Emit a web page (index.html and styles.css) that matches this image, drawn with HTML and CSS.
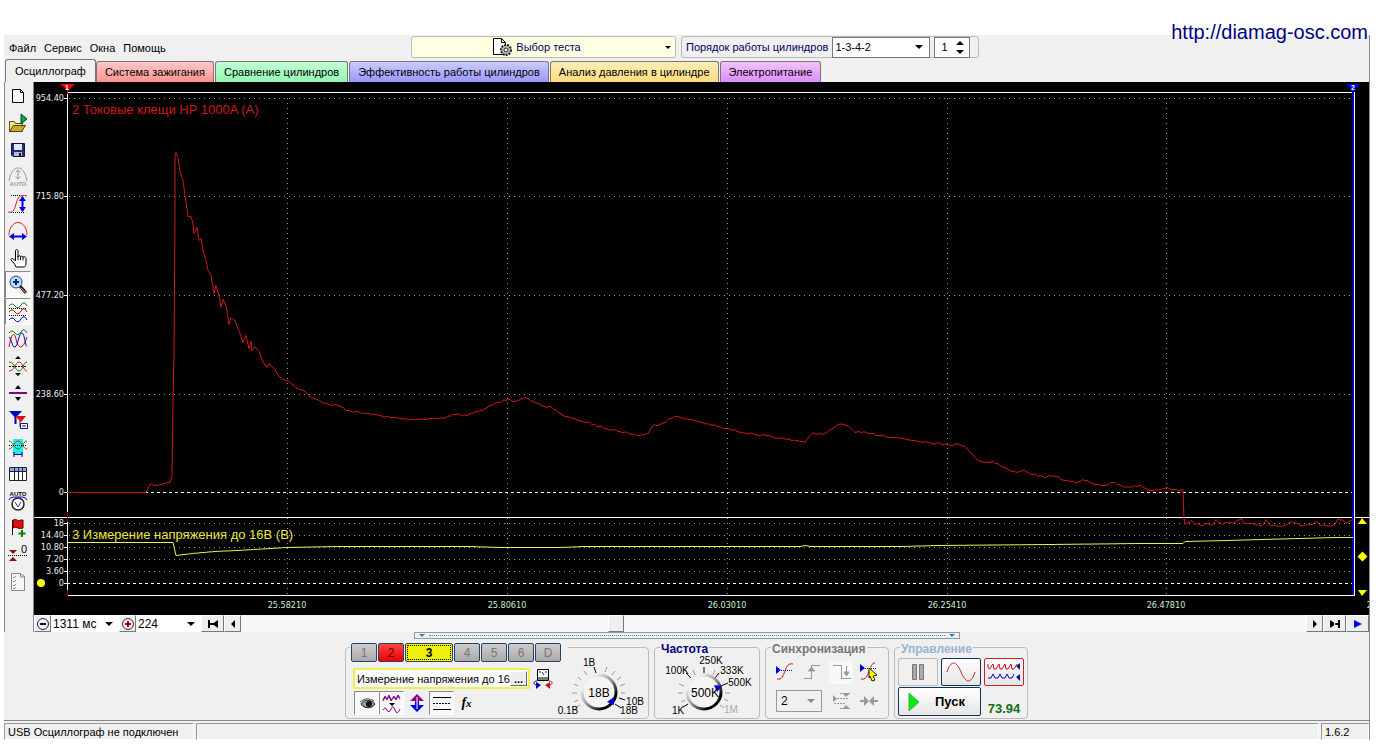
FILE: index.html
```html
<!DOCTYPE html>
<html lang="ru">
<head>
<meta charset="utf-8">
<title>USB Осциллограф</title>
<link rel="stylesheet" href="styles.css">
<script src="traces.js" defer></script>
</head>
<body>
<a class="site" href="http://diamag-osc.com">http://diamag-osc.com</a>
<div class="app">
  <header class="top">
    <nav class="menu">
      <button>Файл</button><button>Сервис</button><button>Окна</button><button>Помощь</button>
    </nav>
    <button class="test">
      <span class="test-name">
        <svg width="21" height="20" viewBox="0 0 21 20"><path d="M1.500 1.500h8l4 4v12h-12z" fill="#fff" stroke="#000"/><path d="M9.500 1.500v4h4" fill="none" stroke="#000"/><circle cx="14" cy="13" r="5" fill="#b9c4b4" stroke="#222" stroke-width="2" stroke-dasharray="2 1"/><circle cx="14" cy="13" r="2" fill="#fff" stroke="#222"/></svg>
        Выбор теста
      </span>
      <i class="down small"></i>
    </button>
    <div class="order">
      <label for="order">Порядок работы цилиндров</label>
      <span class="combo order-combo"><select id="order"><option>1-3-4-2</option></select><i class="down"></i></span>
      <span class="spin">
        <input aria-label="Цилиндр" value="1">
        <span class="spin-keys"><button aria-label="Больше"><i class="up"></i></button><button aria-label="Меньше"><i class="down"></i></button></span>
      </span>
    </div>
  </header>

  <div class="tabs" role="tablist">
    <button class="tab active" role="tab">Осциллограф</button>
    <button class="tab red" role="tab">Система зажигания</button>
    <button class="tab green" role="tab">Сравнение цилиндров</button>
    <button class="tab blue" role="tab">Эффективность работы цилиндров</button>
    <button class="tab amber" role="tab">Анализ давления в цилиндре</button>
    <button class="tab violet" role="tab">Электропитание</button>
  </div>

  <main class="work">
    <div class="tools">
      <button aria-label="Новый"><svg viewBox="0 0 22 22"><path d="M5.500 4.500h8l3 3v10h-11z" fill="#fff" stroke="#000"/><path d="M13.500 4.500v3h3" fill="none" stroke="#000"/></svg></button>
      <button aria-label="Открыть"><svg viewBox="0 0 22 22"><path d="M2.500 19.500v-10h5l1 2h7v8z" fill="#f6e08a" stroke="#665500"/><path d="M2.500 19.500l4-6h12l-4 6z" fill="#c9a92c" stroke="#544400"/><path d="M14 2v10l6-5z" fill="#0a4" stroke="#042"/></svg></button>
      <button aria-label="Сохранить"><svg viewBox="0 0 22 22"><path d="M4.500 4.500h13v13H6l-1.500-1.500z" fill="#24307c" stroke="#101638"/><path d="M7 5h8v6H7z" fill="#dfe8ff"/><path d="M7 13h8v4H7z" fill="#b8bcc8"/><path d="M12 14h2v3h-2z" fill="#111"/></svg></button>
      <button aria-label="Авто" disabled><svg viewBox="0 0 22 22"><g fill="none" stroke="#999"><path d="M2 15C4 5 7 2 11 2s7 3 9 13M11 4v9M8.500 6.500L11 4l2.500 2.500M8.500 10.500L11 13l2.500-2.500"/></g><text x="11" y="20" class="tiny dim">AUTO</text></svg></button>
      <button aria-label="Вертикальный масштаб"><svg viewBox="0 0 22 22"><path d="M4 2.500h14M4 19.500h14" stroke="#000" stroke-dasharray="1 1"/><path d="M1 19c5 1 6-1 8-8s4-10 11-8" fill="none" stroke="#c22"/><path d="M15.500 4v14" stroke="#00d" stroke-width="2"/><path d="M12 8l3.500-5L19 8zM12 14l3.500 5 3.500-5z" fill="#00d"/></svg></button>
      <button aria-label="Горизонтальный масштаб"><svg viewBox="0 0 22 22"><path d="M2 15C2 8 6 2.500 11 2.500S20 8 20 15" fill="none" stroke="#d22"/><path d="M4 16.500h14" stroke="#00d" stroke-width="2"/><path d="M7 13l-5 3.500L7 20zM15 13l5 3.500-5 3.500z" fill="#00d"/></svg></button>
      <button aria-label="Перемещение"><svg viewBox="0 0 22 22"><path d="M8.500 14V4c0-2 2.500-2 2.500 0v6c0-2 2.500-1.500 2.500 0 0-1.500 2.500-1 2.500.5 0-1.500 3-1 3 1V16c0 2-1 4-2 4H9c-1-3-3-5-5-7 0-2 2-2 4.500 1z" fill="#fff" stroke="#000"/><path d="M11 9v4M13.500 10v3M16 10.500v3" stroke="#000"/></svg></button>
      <button class="on" aria-label="Лупа"><svg viewBox="0 0 22 22"><path d="M13 12l6 7" stroke="#222" stroke-width="3"/><path d="M14 14l5 5" stroke="#c96" stroke-width="1"/><circle cx="9" cy="8" r="6" fill="#b8dcff" stroke="#247"/><path d="M9 5v6M6 8h6" stroke="#029" stroke-width="2"/></svg></button>
      <button class="on" aria-label="Раздельно"><svg viewBox="0 0 22 22" fill="none"><path d="M2 5q3-4 6 0t6-1 6 1" stroke="#080"/><path d="M2 7.500h18M2 14.500h18" stroke="#000" stroke-dasharray="1 1"/><path d="M2 11q3-4 6 0t6-1 6 1" stroke="#c00"/><path d="M2 19q3-4 6 0t6-1 6 1" stroke="#00c"/></svg></button>
      <button aria-label="Вместе"><svg viewBox="0 0 22 22" fill="none"><path d="M2 5q3-4 6 0t6-1 6 1" stroke="#080"/><path d="M2 19C5 1 8 6 9 11s5 16 11-2" stroke="#c00"/><path d="M2 9c3 2 3 11 6 10s4-15 7-14 3 14 5 13" stroke="#00c"/></svg></button>
      <button aria-label="Центрировать"><svg viewBox="0 0 22 22" fill="none"><path d="M2 11.500h18" stroke="#000" stroke-dasharray="2 1"/><path d="M2 7c6 0 6 9 10 9s4-9 8-9" stroke="#080"/><path d="M2 16c6 0 6-9 10-9s4 9 8 9" stroke="#c22"/><path d="M8 4h6l-3-3zM8 18h6l-3 3z" fill="#000"/></svg></button>
      <button aria-label="Сжать"><svg viewBox="0 0 22 22"><path d="M2 11h18" stroke="#808" stroke-width="2"/><path d="M8 7h6l-3-4zM8 15h6l-3 4z" fill="#000"/></svg></button>
      <button aria-label="Маркеры"><svg viewBox="0 0 22 22"><path d="M2 2h13L8.500 9z" fill="#00d"/><path d="M8.500 3v12" stroke="#00a" stroke-width="2"/><path d="M8 7h11l-5 6z" fill="#d11"/><path d="M13 12v6" stroke="#a00"/><path d="M13.500 14.500h7v5h-7z" fill="#fff" stroke="#118"/><path d="M15 17h4" stroke="#118"/></svg></button>
      <button aria-label="Интервал"><svg viewBox="0 0 22 22" fill="none"><path d="M6 3h10v16H6z" fill="#2ee"/><path d="M2 5c4 0 5 8 9 8s5-8 9-8" stroke="#080"/><path d="M2 13c4 0 5-8 9-8s5 8 9 8" stroke="#c22"/><path d="M2 9.500h18" stroke="#000" stroke-dasharray="1 1"/><path d="M7 18.500h8M7 16v5M15 16v5" stroke="#00a"/></svg></button>
      <button aria-label="Таблица"><svg viewBox="0 0 22 22"><path d="M2.500 4.500h17v13h-17z" fill="#fff" stroke="#223"/><path d="M3 5h16v3H3z" fill="#8ae"/><path d="M2 8.500h18M7.500 5v12M11.500 5v12M15.500 5v12" stroke="#223"/></svg></button>
      <button aria-label="Автоизмерение"><svg viewBox="0 0 22 22"><text x="11" y="6" class="tiny">AUTO</text><path d="M2 10c1-3 4-3 9-3s8 0 9 3" fill="none" stroke="#00c"/><circle cx="11" cy="14" r="6" fill="#fff" stroke="#222" stroke-width="1.500"/><path d="M8 12l3 5 3-5" fill="none" stroke="#33c"/></svg></button>
      <button aria-label="Флаг"><svg viewBox="0 0 22 22"><path d="M5.500 3v15" stroke="#400"/><path d="M6 3c4-2 4 2 8 0h2v8c-4 2-6-2-10 0z" fill="#d11" stroke="#600"/><path d="M15 13v7M11.500 16.500h7" stroke="#080" stroke-width="2"/></svg></button>
      <button aria-label="Обнулить"><svg viewBox="0 0 22 22"><path d="M2 6h8l-4 4zM2 17h8l-4-4z" fill="#811"/><path d="M1 11.500h19" stroke="#000" stroke-dasharray="1 1"/><text x="17" y="9" class="zero">0</text></svg></button>
      <button aria-label="Отчёт" disabled><svg viewBox="0 0 22 22"><path d="M4.500 2.500h9l4 3v14h-13z" fill="#f6f6f6" stroke="#888"/><path d="M13.500 2.500v3.500h4M6 6l1 1 2-2M6 10l1 1 2-2M6 14l1 1 2-2M6 17l1 1 2-2" fill="none" stroke="#888"/></svg></button>
    </div>

    <div class="scope">
      <svg class="plot" viewBox="34 82 1335 533" role="img" aria-label="Осциллограмма">
        <path class="grid" d="M69 98.500H1352M69 196.500H1352M69 295.500H1352M69 394.500H1352M69 523.500H1352M69 535.500H1352M69 547.500H1352M69 559.500H1352M69 571.500H1352M287.500 98V595M507.500 98V595M727.500 98V595M947.500 98V595M1166.500 98V595"/>
        <path class="base" d="M67 492.500H1352M67 583.500H1352"/>
        <path class="frame" d="M67.500 92V596M67 92.500H1354M34 517.500H1369M67 595.500H1355M1354.500 92V596M64 98.500h3M64 196.500h3M64 295.500h3M64 394.500h3M64 492.500h3M64 523.500h3M64 535.500h3M64 547.500h3M64 559.500h3M64 571.500h3M64 583.500h3"/>
        <path d="M1353 90V595" stroke="#0000c8" stroke-width="2"/>
        <path d="M67.500 88v6M67.500 512v10M67.500 590v6" stroke="#a00"/>
        <path d="M60 84h15l-7.500 7z" fill="#e00"/><path d="M1346 84h14l-7 7z" fill="#00e"/>
        <text class="mark" x="67" y="90">1</text><text class="mark" x="1353" y="90">2</text>
        <g class="ylabels">
          <text x="64" y="101">954.40</text><text x="64" y="199">715.80</text><text x="64" y="298">477.20</text><text x="64" y="397">238.60</text><text x="64" y="495">0</text>
          <text x="64" y="526">18</text><text x="64" y="538">14.40</text><text x="64" y="550">10.80</text><text x="64" y="562">7.20</text><text x="64" y="574">3.60</text><text x="64" y="586">0</text>
        </g>
        <g class="xlabels">
          <text x="287" y="608">25.58210</text><text x="507" y="608">25.80610</text><text x="727" y="608">26.03010</text><text x="947" y="608">26.25410</text><text x="1166" y="608">26.47810</text><text x="1386" y="608">26.70210</text>
        </g>
        <path id="current" class="trace current"/>
        <path id="voltage" class="trace voltage"/>
        <text class="name current-name" x="72" y="114">2 Токовые клещи HP 1000A (A)</text>
        <text class="name voltage-name" x="72" y="539">3 Измерение напряжения до 16В (В)</text>
        <circle cx="41" cy="583" r="4" fill="#ff0"/>
        <path d="M1358 524l4-6 5 6zM1357.500 556.500l5-5 5 5-5 5zM1358 590h9l-5 6z" fill="#ff0"/>
      </svg>

      <div class="timebar">
        <button class="key" aria-label="Уменьшить"><svg width="14" height="14" viewBox="0 0 14 14"><circle cx="7" cy="7" r="5.500" fill="none" stroke="#224"/><path d="M4 7h6" stroke="#006" stroke-width="2"/></svg></button>
        <span class="combo span-combo"><select aria-label="Развёртка"><option>1311 мс</option></select><i class="down"></i></span>
        <button class="key" aria-label="Увеличить"><svg width="14" height="14" viewBox="0 0 14 14"><circle cx="7" cy="7" r="5.500" fill="none" stroke="#422"/><path d="M4 7h6M7 4v6" stroke="#a00" stroke-width="2"/></svg></button>
        <span class="combo span-combo"><select aria-label="Кадр"><option>224</option></select><i class="down"></i></span>
        <button class="key wide" aria-label="В начало"><svg width="12" height="10" viewBox="0 0 12 10"><path d="M1 1h2v8H1zM11 1v8L5 5zM3 4h4v2H3z"/></svg></button>
        <button class="key" aria-label="Назад"><svg width="6" height="10" viewBox="0 0 6 10"><path d="M5 1v8L1 5z"/></svg></button>
        <input class="scroll" type="range" aria-label="Прокрутка" min="0" max="100" value="35">
        <button class="key" aria-label="Вперёд"><svg width="6" height="10" viewBox="0 0 6 10"><path d="M1 1v8l4-4z"/></svg></button>
        <button class="key wide" aria-label="В конец"><svg width="12" height="10" viewBox="0 0 12 10"><path d="M1 1v8l6-4zM9 1h2v8H9zM5 4h4v2H5z"/></svg></button>
        <button class="key wide" aria-label="Просмотр"><svg width="10" height="10" viewBox="0 0 10 10"><path d="M1 1v8l8-4z" fill="#00e"/></svg></button>
      </div>
    </div>
  </main>

  <div class="splitter"><i></i><span></span><i></i></div>

  <section class="panels">
    <fieldset class="panel channels">
      <legend class="picks">
        <button>1</button><button class="ch-red">2</button><button class="ch-yellow">3</button><button>4</button><button>5</button><button>6</button><button>D</button>
      </legend>
      <div class="channel">
        <div class="probe">
          <span class="probe-name"><input aria-label="Датчик" value="Измерение напряжения до 16В"><button>...</button></span>
          <button class="flat" aria-label="Обмен"><svg width="20" height="22" viewBox="0 0 20 22"><path d="M4.500 1.500h11v11h-11z" fill="#fff" stroke="#000"/><path d="M5 9h10v3H5z" fill="#698a72"/><path d="M6 4h2M9 4l2 3M12 4h2" stroke="#333"/><path d="M4 13c-4 0-4 3-1 4" fill="none" stroke="#00a"/><path d="M3 14l5 3-5 4z" fill="#00a"/><path d="M16 13c4 0 4 3 1 4" fill="none" stroke="#c11"/><path d="M17 14l-5 3 5 4z" fill="#c11"/></svg></button>
        </div>
        <div class="modes">
          <button class="on" aria-label="Показать"><svg viewBox="0 0 22 22"><path d="M5 12c2-5 11-5 14 0-3 5-11 5-14 0z" fill="#999" stroke="#222"/><circle cx="13" cy="12" r="3" fill="#111"/><path d="M4 10c4-4 10-4 14-1" stroke="#555" fill="none"/></svg></button>
          <button class="on" aria-label="Фильтр"><svg viewBox="0 0 22 22"><path d="M2 8l2-4 2 3 2-4 2 5 3-4 2 3 2-4 2 3" fill="none" stroke="#808"/><path d="M2 9l2-4 2 3 2-4 2 5 3-4 2 3 2-4 2 3" fill="none" stroke="#808"/><path d="M8 11h6l-3 3z"/><path d="M2 18q2-4 4 0t4-1 4 1 5-1" fill="none" stroke="#907"/></svg></button>
          <button aria-label="Инверсия"><svg viewBox="0 0 22 22"><path d="M11 2l7 7h-5v3H9V9H4z" fill="#808"/><path d="M11 20l7-7h-5v-3H9v3H4z" fill="#00e"/><path d="M11 5v12" stroke="#fff"/></svg></button>
          <button class="on" aria-label="Уровни"><svg viewBox="0 0 22 22"><path d="M2 5.500h18M2 17.500h18" stroke="#000"/><path d="M2 11.500h18" stroke="#000" stroke-dasharray="2 1"/></svg></button>
          <button class="fx">f<sub>x</sub></button>
        </div>
      </div>
      <svg class="dial" viewBox="558 652 90 64" role="img" aria-label="Диапазон 18В">
        <defs><linearGradient id="rim" x1="0" y1="0" x2="1" y2="1"><stop offset=".2" stop-color="#eee"/><stop offset=".5" stop-color="#999"/><stop offset=".8" stop-color="#000"/></linearGradient></defs>
        <path class="ticks" d="M581 705l-5 3M579 700l-4 2M578 693h-5M579 686l-4-2M582 680l-3-3M588 675l-3-4M606 672l2-5M613 675l3-4M618 680l4-3M621 686l5-2M622 693h4"/>
        <path d="M597 673l-2-6M620 698l6 2M616 704l6 4" stroke="#000"/>
        <circle cx="600" cy="692" r="17" fill="#f4f4f4" stroke="url(#rim)" stroke-width="3"/>
        <path d="M608 702l7-5v8z" fill="#00d"/>
        <text class="value" x="600" y="697">18В</text>
        <text class="scale" x="590" y="666">1В</text><text class="scale" x="569" y="714">0.1В</text><text class="scale" x="636" y="705">10В</text><text class="scale" x="630" y="714">18В</text>
      </svg>
    </fieldset>

    <fieldset class="panel rate">
      <legend class="navy">Частота</legend>
      <svg class="rate-dial" viewBox="657 652 100 64" role="img" aria-label="Частота 500K">
        <path class="ticks" d="M685 700l-4 2M683 693h-5M684 686l-5-2M695 675l-2-5M713 675l2-5M725 693h5M724 699l4 2M720 705l4 3"/>
        <path d="M691 678l-5-5M704 673v-6M715 678l4-5M721 686l7-3M688 704l-5 3" stroke="#000"/>
        <circle cx="704" cy="692" r="17" fill="#f4f4f4" stroke="url(#rim)" stroke-width="3"/>
        <path d="M714 685l8 1-5 6z" fill="#00d"/>
        <text class="value" x="705" y="697">500K</text>
        <text class="scale" x="711" y="664">250K</text><text class="scale" x="677" y="674">100K</text><text class="scale" x="732" y="674">333K</text><text class="scale" x="740" y="686">500K</text><text class="scale" x="678" y="714">1K</text><text class="scale faint" x="731" y="713">1M</text>
      </svg>
    </fieldset>

    <fieldset class="panel sync">
      <legend class="gray">Синхронизация</legend>
      <div class="sync-grid">
        <button aria-label="Уровень"><svg viewBox="0 0 22 22"><path d="M3 18c5 1 6-3 8-8s3-8 8-7" fill="none" stroke="#c11"/><path d="M5 9.500h14" stroke="#00c" stroke-dasharray="1 1"/><path d="M2 5v8l5-4z" fill="#00d"/></svg></button>
        <button disabled aria-label="Фронт"><svg viewBox="0 0 22 22" fill="none" stroke="#999"><path d="M2 17.500h8M9.500 18V4M9 4.500h9"/><path d="M9.500 15V7M6.500 10l3-4 3 4z" fill="#999"/></svg></button>
        <button disabled class="on" aria-label="Спад"><svg viewBox="0 0 22 22" fill="none" stroke="#999"><path d="M3 4.500h8M11.500 4v14M11 17.500h10M16.500 5v9"/><path d="M14 11l2.500 4 2.500-4z" fill="#999"/></svg></button>
        <button aria-label="Ручной"><svg viewBox="0 0 22 22"><path d="M3 18c5 1 6-3 8-8s3-8 6-8" fill="none" stroke="#c11"/><path d="M5 7.500h14" stroke="#00c" stroke-dasharray="1 1"/><path d="M2 3v8l5-4z" fill="#00d"/><path d="M11 7l8 7-4 1 2 4-3 1-2-5-1 2z" fill="#ff0" stroke="#220"/></svg></button>
        <span class="combo sync-combo"><select disabled aria-label="Канал"><option>2</option></select><i class="down"></i></span>
        <button disabled aria-label="Границы"><svg viewBox="0 0 22 22"><path d="M12 3h8l-4 4zM12 19h8l-4-4zM3 5v7l4-3z" fill="#999"/><path d="M4 8.500h14M4 13.500h12M10 3.500h10M10 18.500h10" stroke="#999" stroke-dasharray="2 1"/></svg></button>
        <button disabled aria-label="Свести"><svg viewBox="0 0 22 22"><path d="M2 10h4V6l5 5-5 5v-4H2zM20 10h-4V6l-5 5 5 5v-4h4z" fill="#999"/></svg></button>
      </div>
    </fieldset>

    <fieldset class="panel run">
      <legend class="pale">Управление</legend>
      <div class="run-grid">
        <button class="pause" disabled aria-label="Пауза"><svg width="14" height="18" viewBox="0 0 14 18"><path d="M1.500 1.500h4v15h-4zM8.500 1.500h4v15h-4z" fill="#aaa" stroke="#777"/></svg></button>
        <button aria-label="Однократно"><svg width="30" height="22" viewBox="0 0 30 22"><path d="M1 11C5-1 10-1 15 11s10 12 14 0" fill="none" stroke="#c22"/></svg></button>
        <button class="cyclic" aria-label="Циклически"><svg width="34" height="22" viewBox="0 0 34 22"><path d="M1 3v4l2 1 2-4 1-1 1 5h2l3-5 1 5h2l3-5 1 5h2l3-5 1 5h2l3-5" fill="none" stroke="#c11"/><path d="M1 17h3l2-4 2 4h3l2-4 2 4h3l2-4 2 4h3l2-4" fill="none" stroke="#00c"/><path d="M33 2v7l-4-4zM33 13v7l-4-4z" fill="#119"/></svg></button>
        <button class="start"><svg width="12" height="20" viewBox="0 0 12 20"><path d="M1 1v18l10-9z" fill="#0e0" stroke="#4a6"/></svg><span>Пуск</span></button>
        <output>73.94</output>
      </div>
    </fieldset>
  </section>

  <footer class="status"><span>USB Осциллограф не подключен</span><span></span><span>1.6.2</span></footer>
</div>
</body>
</html>
```
FILE: styles.css
```css
* { box-sizing: border-box; }
body { margin: 0; padding: 35px 12px 4px 4px; background: #fff; color: #000; font: 11px/14px "Liberation Sans", Arial, sans-serif; position: relative; }
button, input, select { font: inherit; color: inherit; margin: 0; padding: 0; border: 0; border-radius: 0; background: none; }
button { display: flex; align-items: center; justify-content: center; }
svg { display: block; flex: none; }
.site { position: absolute; top: 20px; right: 14px; font-size: 20px; line-height: 24px; color: #000080; text-decoration: none; }
.app { background: #f0f0f0; border-right: 1px solid #888; }

.up, .down { width: 0; height: 0; border: 4px solid transparent; border-bottom-width: 0; border-top-color: #000; flex: none; }
.up { border-bottom: 4px solid #000; border-top: 0; }
.down.small { border-width: 3px 3px 0; }
.combo { position: relative; display: flex; background: #fff; }
.combo select { appearance: none; flex: 1; min-width: 0; padding: 0 2px; opacity: 1; }
.combo .down { position: absolute; right: 6px; top: 50%; margin-top: -2px; pointer-events: none; }

.top { display: flex; height: 24px; padding-top: 1px; }
.menu { display: flex; gap: 8px; width: 407px; padding: 0 0 0 5px; }
.test { width: 265px; height: 22px; margin-right: 5px; padding: 0 4px; background: #ffffe1; border: 1px solid #bbb; border-radius: 3px; color: #000060; }
.test-name { display: flex; flex: 1; align-items: center; justify-content: center; gap: 3px; padding-right: 8px; }
.order { display: flex; align-items: center; height: 22px; padding: 0 8px 0 4px; border: 1px solid #bbb; border-radius: 3px; color: #000060; gap: 4px; }
.order-combo, .spin { height: 21px; border: 1px solid #777; color: #000; }
.order-combo { width: 98px; }
.spin { display: flex; width: 36px; background: #fff; }
.spin input { width: 17px; padding-left: 6px; flex: 1; min-width: 0; }
.spin-keys { display: flex; flex-direction: column; justify-content: center; gap: 5px; padding-right: 5px; }

.tabs { display: flex; align-items: flex-end; gap: 1px; height: 23px; padding-left: 1px; }
.tab { height: 21px; padding: 0 8px; border: 1px solid #777; border-bottom: 0; border-radius: 3px 3px 0 0; white-space: nowrap; }
.active { height: 23px; padding: 0 9px; background: #f0f0f0; margin-right: -1px; }
.red { background: linear-gradient(#ffc8c8, #ff9292); }
.green { background: linear-gradient(#c4ffd6, #90f8b2); }
.blue { background: linear-gradient(#ccccff, #9898ff); }
.amber { background: linear-gradient(#ffedb8, #ffdc7c); }
.violet { background: linear-gradient(#f0c4ff, #dd8cff); }

.work { display: grid; grid-template-columns: 30px minmax(0, 1fr); }
.tools { border-left: 1px solid #888; border-right: 1px solid #888; }
.tools button { width: 26px; height: 27px; }
.tools svg, .modes svg, .sync-grid svg { width: 22px; height: 22px; }
.on { background: #f8f8f8; border: 1px solid; border-color: #888 #fff #fff #888; }
.tiny { font: bold 6px "Liberation Sans", sans-serif; text-anchor: middle; }
.dim { fill: #999; }
.zero { font: 11px "Liberation Sans", sans-serif; text-anchor: middle; }
.scope { background: #000; min-width: 0; }
.plot { width: 100%; height: auto; background: #000; font-family: "Liberation Sans", Arial, sans-serif; }
.grid { stroke: #999; stroke-dasharray: 1 4; shape-rendering: crispEdges; }
.base { stroke: #fff; stroke-dasharray: 3 3; shape-rendering: crispEdges; }
.frame { stroke: #fff; shape-rendering: crispEdges; }
.ylabels, .xlabels { font-family: "DejaVu Sans Condensed", "Liberation Sans", sans-serif; font-size: 9px; fill: #eee; text-anchor: end; }
.xlabels { fill: #c8f0d0; text-anchor: middle; }
.mark { font-size: 7px; font-weight: bold; fill: #fff; text-anchor: middle; }
.name { font-size: 13px; }
.current-name { fill: #d01818; }
.voltage-name { fill: #e8e840; }
.trace { fill: none; stroke-width: 1; }
.current { stroke: #d01818; }
.voltage { stroke: #f0f050; }

.timebar { display: flex; height: 17px; background: #f0f0f0; }
.key { width: 17px; background: #eee; border: 1px solid; border-color: #fff #777 #777 #fff; }
.wide { width: 23px; }
.span-combo { width: 68px; font-size: 12px; }
.span-combo:nth-of-type(2) { width: 65px; }
.scroll { appearance: none; flex: 1; min-width: 0; height: 17px; background: repeating-conic-gradient(#fff 0 25%, #f0f0f0 0 50%) 0 0 / 2px 2px; }
.scroll::-webkit-slider-thumb { appearance: none; width: 16px; height: 17px; background: #eee; border: 1px solid; border-color: #fff #777 #777 #fff; }

.splitter { display: flex; align-items: center; justify-content: space-between; width: 546px; height: 7px; margin: 0 auto; padding: 0 4px; border: 1px solid #999; }
.splitter i { border: 3px solid transparent; border-top-color: #28c; border-bottom: 0; }
.splitter span { flex: 1; margin: 0 4px; border-top: 1px dotted #39d; }

.panels { display: flex; justify-content: center; gap: 5px; padding: 4px 0 1px; border-bottom: 1px solid #888; }
.panel { display: flex; min-width: 0; height: 76px; margin: 0; padding: 0; border: 1px solid #bbb; border-radius: 4px; }
.panel legend { height: 9px; margin-left: 5px; padding: 0 1px; font-size: 12px; line-height: 12px; font-weight: bold; }
.navy { color: #000080; }
.gray { color: #777; }
.pale { color: #9ab4d0; }
.panel .picks { display: flex; gap: 1px; margin-left: 4px; padding-right: 7px; align-items: flex-start; }
.picks button { width: 26px; height: 19px; flex: none; background: linear-gradient(#ccc, #aaa); border: 1px solid #246; border-radius: 2px; color: #777; font-size: 12px; font-weight: normal; }
.picks .ch-red { background: linear-gradient(#f44, #e00); color: #600; }
.picks .ch-yellow { width: 48px; background: #f0f010; color: #000; font-weight: bold; outline: 1px dotted #000; outline-offset: -3px; }
.channels { width: 304px; }
.channel { width: 211px; padding: 16px 0 0 7px; }
.probe { display: flex; gap: 3px; }
.probe-name { display: flex; width: 177px; height: 21px; padding: 1px; background: #fff; border: 2px solid #f2ee50; }
.probe-name input { flex: 1; min-width: 0; padding-left: 1px; }
.probe-name button { width: 17px; background: #eee; border: 1px solid; border-color: #fff #666 #666 #fff; font-weight: bold; line-height: 8px; }
.modes { display: flex; padding: 1px 0 0 1px; }
.modes button { width: 25px; height: 24px; }
.fx { font: italic bold 14px "Liberation Serif", serif; }
.fx sub { font-size: 11px; }
.dial { width: 90px; height: 64px; }
.dial, .rate-dial { font-family: "Liberation Sans", Arial, sans-serif; }
.ticks { stroke: #999; }
.value { font-size: 12px; text-anchor: middle; }
.scale { font-size: 10px; text-anchor: middle; }
.faint { fill: #aaa; }
.rate { width: 106px; }
.rate-dial { width: 100px; height: 64px; margin-left: 2px; }
.sync { width: 124px; }
.sync-grid { display: grid; grid-template-columns: repeat(4, 28px); grid-template-rows: 24px 22px; row-gap: 6px; padding: 8px 0 0 5px; align-items: center; justify-items: center; }
.sync-grid button { width: 24px; height: 23px; }
.sync-grid .on { border-color: #f8f8f8; }
.sync-combo { grid-column: span 2; width: 46px; height: 22px; background: #f0f0f0; border: 1px solid #999; font-size: 12px; }
.sync-combo select { padding-left: 4px; }
.sync-combo .down { border-top-color: #888; }
.run { width: 134px; }
.run-grid { display: grid; grid-template-columns: repeat(3, 40px); grid-template-rows: 28px 29px; gap: 1px 3px; padding: 6px 0 0 3px; }
.run-grid button { border: 1px solid #135; border-radius: 2px; background: linear-gradient(#fff, #e6e6e6); }
.run-grid .pause { border-color: #bbb; background: #f0f0f0; }
.run-grid .cyclic { border-color: #c22; }
.run-grid .start { grid-column: span 2; justify-content: flex-start; padding-left: 9px; font-size: 13px; font-weight: bold; }
.start span { flex: 1; text-align: center; }
.run-grid output { align-self: end; justify-self: center; font-size: 13px; font-weight: bold; color: #107010; }

.status { display: grid; grid-template-columns: 190px minmax(0, 1fr) 48px; gap: 2px; padding-top: 2px; }
.status span { height: 17px; padding-left: 3px; border: 1px solid; border-color: #999 #fff #fff #999; line-height: 16px; white-space: nowrap; }
```
FILE: traces.js
```js
// Samples are x,y pairs in plot units.
const current = [67,492,146,492,150,484,158,485,164,483,170,482,172,476,173,400,174,351,175,215,175,156,176,152,178,157,180,171,183,180,185,195,188,216,191,216,193,223,194,233,197,227,199,240,201,238,203,250,206,260,208,270,211,275,214,293,216,285,219,295,221,307,223,299,226,305,229,324,231,317,235,320,239,330,243,342,246,335,249,348,251,341,252,350,255,346,259,351,262,359,267,367,269,363,275,369,278,375,284,379,290,382,298,388,305,391,312,397,320,400,328,404,338,405,348,410,365,413,380,415,390,417,410,419,440,418,456,414,466,415,480,410,490,405,500,402,508,399,515,401,525,397,535,402,545,406,552,407,565,416,580,420,600,426,620,431,640,435,648,433,654,424,660,424,668,419,677,416,690,419,710,424,725,428,750,433,780,438,798,440,805,442,812,433,825,433,833,428,838,424,848,425,854,431,868,433,882,435,895,437,915,440,930,442,945,444,960,444,967,448,972,453,978,460,985,462,993,461,1000,465,1012,471,1020,471,1025,470,1030,473,1045,477,1053,475,1065,480,1078,482,1083,479,1093,483,1105,485,1113,482,1125,487,1139,485,1150,490,1160,489,1166,487,1175,489,1183,489,1184,518,1185,524,1192,520,1195,524,1213,524,1216,519,1221,523,1235,522,1242,518,1244,523,1262,525,1266,519,1270,525,1285,525,1291,521,1300,525,1312,524,1316,521,1320,525,1330,526,1335,524,1338,518,1347,523,1353,518];
const voltage = [67,542,173,542,176,555,192,553,215,551,237,550,287,547,340,546,470,546,500,547,560,547,585,546,800,546,805,545,810,546,900,546,940,545,1050,544,1140,543,1183,543,1185,541,1228,540,1262,539,1299,538,1335,537,1353,537];

function line(points, noise) {
  let seed = 7;
  const random = () => (seed = (seed * 16807) % 2147483647) / 2147483647 - 0.5;
  let d = "M" + points[0] + " " + (points[1] + 0.5);
  for (let i = 2; i < points.length; i += 2) {
    const [x0, y0, x1, y1] = [points[i - 2], points[i - 1], points[i], points[i + 1]];
    for (let x = x0 + 2; x < x1 - 1; x += 2) {
      const y = y0 + (y1 - y0) * (x - x0) / (x1 - x0) + (x > 150 ? random() * noise : 0);
      d += "L" + x + " " + (y + 0.5).toFixed(1);
    }
    d += "L" + x1 + " " + (y1 + 0.5);
  }
  return d;
}
document.getElementById("current").setAttribute("d", line(current, 2));
document.getElementById("voltage").setAttribute("d", line(voltage, 0));
```
